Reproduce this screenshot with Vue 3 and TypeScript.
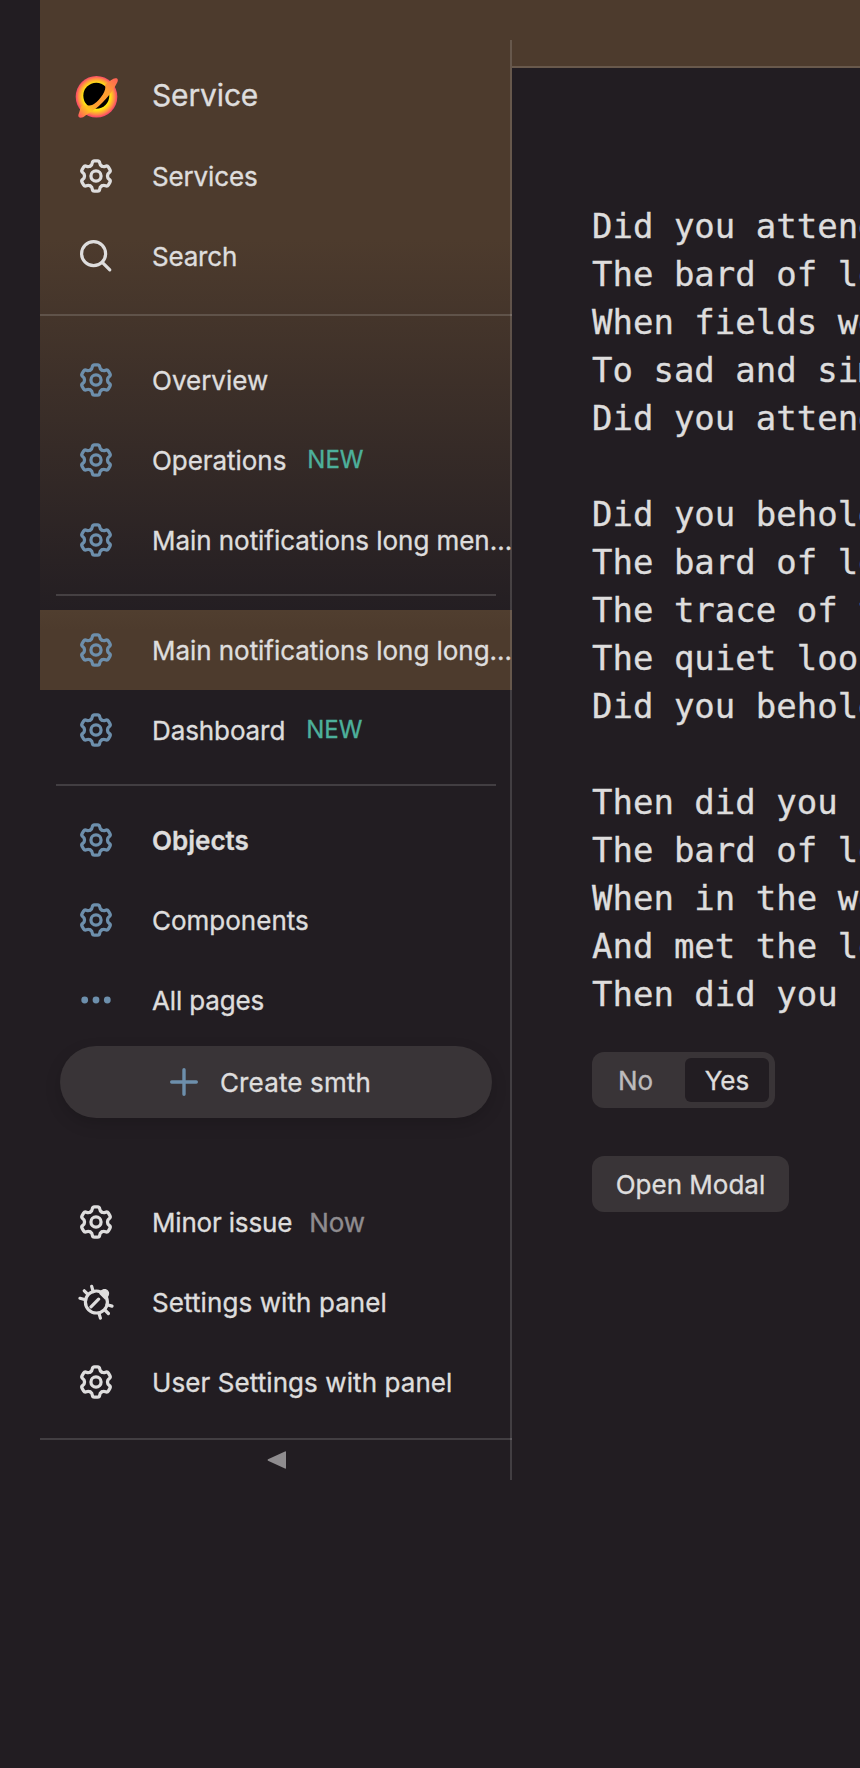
<script setup lang="ts">
interface MenuItem {
  title: string
  icon: 'gear' | 'search' | 'dots' | 'bug'
  tracking?: number
  badge?: string
  muted?: boolean
  active?: boolean
  bold?: boolean
}

const subheader: MenuItem[] = [
  { title: 'Services', icon: 'gear', tracking: -0.15 },
  { title: 'Search', icon: 'search', tracking: -0.2 },
]

const groups: MenuItem[][] = [
  [
    { title: 'Overview', icon: 'gear' },
    { title: 'Operations', icon: 'gear', badge: 'NEW', tracking: -0.05 },
    { title: 'Main notifications long men…', icon: 'gear', tracking: -0.05 },
  ],
  [
    { title: 'Main notifications long long…', icon: 'gear', active: true, tracking: -0.05 },
    { title: 'Dashboard', icon: 'gear', badge: 'NEW', tracking: -0.1 },
  ],
  [
    { title: 'Objects', icon: 'gear', bold: true },
    { title: 'Components', icon: 'gear' },
    { title: 'All pages', icon: 'dots', tracking: -0.15 },
  ],
]

const footer: MenuItem[] = [
  { title: 'Minor issue', icon: 'gear', badge: 'Now', muted: true, tracking: -0.18 },
  { title: 'Settings with panel', icon: 'bug', tracking: 0.09 },
  { title: 'User Settings with panel', icon: 'gear', tracking: 0.08 },
]

const sections = [
  { name: 'top', groups: [subheader] },
  { name: 'menu', groups },
  { name: 'bottom', groups: [footer] },
]

const teeth = [0, 60, 120, 180, 240, 300]

const poem = `Did you attend? He sang by grove ripe -
The bard of love, the singer of his mourning.
When fields were silent by the early morning,
To sad and simple sounds of a pipe
Did you attend?

Did you behold in dark of forest leaf
The bard of love, the singer of his sadness?
The trace of tears, the smile, the utter paleness,
The quiet look, full of eternal grief,
Did you behold?

Then did you sigh when hearing how cries
The bard of love, the singer of his dolor?
When in the woods you saw the young man, sole,
And met the look of his extinguished eyes,
Then did you sigh?`
</script>

<template>
  <div class="page">
    <aside class="aside">
      <div class="brand">
        <svg class="logo" viewBox="0 0 60 60">
          <defs>
            <radialGradient id="disc" cx="26.5" cy="31.5" r="20.8" gradientUnits="userSpaceOnUse">
              <stop offset=".62" stop-color="#ffee10" />
              <stop offset=".74" stop-color="#ffc224" />
              <stop offset=".87" stop-color="#ff8748" />
              <stop offset=".98" stop-color="#f94c66" />
            </radialGradient>
            <linearGradient id="band" x1="46" y1="14" x2="10" y2="52" gradientUnits="userSpaceOnUse">
              <stop offset="0" stop-color="#ff6355" />
              <stop offset=".28" stop-color="#ff9f30" />
              <stop offset=".62" stop-color="#ff9b32" />
              <stop offset=".78" stop-color="#ffc51c" />
              <stop offset="1" stop-color="#ff5c5c" />
            </linearGradient>
          </defs>
          <circle cx="26.5" cy="31.7" r="20.8" fill="url(#disc)" />
          <circle cx="26.3" cy="30.8" r="13" fill="#000" />
          <path
            d="M34.8 20 C39.5 16.2 43 13.3 45.3 13.2 C48 13 48.4 15.1 47.2 17.4 C43 26.5 31.5 40.5 21 46.7 C16.8 49 13.7 52.9 10.6 52.7 C8.1 52.5 7.8 50.6 9 48 C10.5 44.8 9.7 42 12 41 C15.4 39.6 20 41.8 24.3 38.8 C30.5 34.5 37.4 24.3 34.8 20 Z"
            fill="url(#band)"
          />
        </svg>
        <span class="brand-title">Service</span>
      </div>

      <nav v-for="section in sections" :key="section.name" :class="['section', section.name]">
        <ul v-for="(group, g) in section.groups" :key="g" class="group">
          <li
            v-for="item in group"
            :key="item.title"
            :class="['item', { active: item.active, bold: item.bold }]"
          >
            <svg v-if="item.icon === 'gear'" class="icon" viewBox="0 0 16 16">
              <g class="line">
                <path
                  v-for="angle in teeth"
                  :key="angle"
                  :transform="`rotate(${angle} 8 8)`"
                  d="M5.45 3.58c.45-.26.85-.7.9-1.4.06-.6.4-.93 1-.93h1.3c.6 0 .94.33 1 .93.05.7.45 1.14.9 1.4"
                />
                <circle cx="8" cy="8" r="2.25" />
              </g>
            </svg>
            <svg v-else-if="item.icon === 'search'" class="icon" viewBox="0 0 36 36">
              <g class="line wide">
                <circle cx="15.6" cy="15.7" r="12" />
                <path d="m24.3 24.3 7.5 7.5" />
              </g>
            </svg>
            <svg v-else-if="item.icon === 'dots'" class="icon" viewBox="0 0 36 36">
              <circle cx="6.7" cy="18" r="3.4" fill="currentColor" />
              <circle cx="18" cy="18" r="3.4" fill="currentColor" />
              <circle cx="29.3" cy="18" r="3.4" fill="currentColor" />
            </svg>
            <svg v-else class="icon" viewBox="0 0 36 36">
              <g class="line wide">
                <circle cx="18.4" cy="18" r="11" />
                <path d="m13 22.8 7.6-7.6M13.7 2.3l1.5 5.5M6.3 6.8l3.6 3.6M2 14.3l5.4 1.5M29.2 20.8l4.8 1.3M27.4 26.5l3 3M21 29.4l1.4 4.7" />
              </g>
              <path d="M22.7 6.6c2.4-2.3 6-2 7.5.2 1.6 2 1.2 4.7-.6 6.6l-2.5 2.3-6-6Z" fill="currentColor" />
            </svg>
            <span class="label" :style="{ letterSpacing: `${item.tracking ?? 0}px` }">{{ item.title }}</span>
            <span v-if="item.badge" :class="['badge', { muted: item.muted }]">{{ item.badge }}</span>
          </li>
        </ul>
        <button v-if="section.name === 'menu'" class="create" type="button">
          <svg class="plus" viewBox="0 0 28 28"><path d="M14 1.7v24.6M1.7 14h24.6" /></svg>
          <span class="create-label">Create smth</span>
        </button>
      </nav>

      <div class="collapse">
        <svg class="arrow" viewBox="0 0 19 18">
          <path d="M1 8.2 18 .4q1-.4 1 .7v15.8q0 1.1-1 .7L1 9.8q-1-.8 0-1.6Z" fill="currentColor" />
        </svg>
      </div>
    </aside>

    <main class="main">
      <div class="top-strip"></div>
      <div class="content">
        <pre class="poem">{{ poem }}</pre>
        <div class="switch">
          <span class="option">No</span>
          <span class="option selected">Yes</span>
        </div>
        <button class="modal" type="button">Open Modal</button>
      </div>
    </main>
  </div>
</template>

<style>
body {
  margin: 0;
  background: #221d22;
}
</style>

<style scoped>
.page {
  display: grid;
  grid-template-columns: 472px 1fr;
  width: 860px;
  height: 1768px;
  padding-left: 40px;
  box-sizing: border-box;
  overflow: hidden;
  background: #221d22;
  color: #dedddd;
  font: 26px/36px Inter, "Liberation Sans", sans-serif;
  -webkit-text-stroke: 0.35px currentColor;
}
.aside {
  position: relative;
  display: flex;
  flex-direction: column;
  height: 1480px;
  padding-top: 56px;
  box-sizing: border-box;
  background: linear-gradient(#4d3b2d 240px, rgba(77, 59, 45, 0) 625px);
}
.aside::after {
  content: "";
  position: absolute;
  top: 40px;
  right: 0;
  bottom: 0;
  width: 2px;
  background: rgba(255, 255, 255, 0.15);
}
.brand {
  display: flex;
  align-items: center;
  height: 80px;
}
.logo {
  width: 60px;
  height: 60px;
  margin: -2px 22px 0 30px;
}
.brand-title {
  font-size: 30px;
  margin-top: -3px;
  letter-spacing: -0.15px;
}
.section {
  display: flex;
  flex-direction: column;
}
.top {
  height: 178px;
  border-bottom: 2px solid rgba(255, 255, 255, 0.15);
}
.menu {
  padding-top: 24px;
}
.menu .icon {
  color: #6d8fac;
}
.group {
  margin: 0;
  padding: 0;
  list-style: none;
}
.group + .group::before {
  content: "";
  display: block;
  height: 2px;
  margin: 14px 16px;
  background: rgba(255, 255, 255, 0.15);
}
.item {
  display: flex;
  align-items: center;
  height: 80px;
  white-space: nowrap;
}
.active {
  background: linear-gradient(#503e2f, #4d3b2d 20px);
}
.bold .label {
  font-weight: 600;
}
.icon {
  flex: none;
  width: 36px;
  height: 36px;
  margin: 0 38px;
}
.line {
  fill: none;
  stroke: currentColor;
  stroke-width: 1.45;
  stroke-linecap: round;
}
.wide {
  stroke-width: 3.2;
}
.label {
  flex: none;
  margin-top: 2px;
}
.badge {
  margin: 0 0 0 21px;
  color: #4db09b;
  font-size: 24px;
}
.badge.muted {
  margin: 2px 0 0 17px;
  color: #8f8c8f;
  font-size: 26px;
  letter-spacing: -0.1px;
}
.create {
  display: flex;
  align-items: center;
  justify-content: center;
  gap: 22px;
  height: 72px;
  margin: 6px 20px 0;
  padding: 0 11px 0 0;
  border: 0;
  border-radius: 36px;
  background: #393437;
  box-shadow: 0 6px 16px rgba(0, 0, 0, 0.15);
  color: inherit;
  font: inherit;
}
.create-label {
  margin-top: 2px;
  letter-spacing: 0.15px;
}
.plus {
  width: 28px;
  height: 28px;
  fill: none;
  stroke: #6d8fac;
  stroke-width: 3.4;
  stroke-linecap: round;
}
.bottom {
  margin-top: 64px;
  height: 256px;
  border-bottom: 2px solid rgba(255, 255, 255, 0.15);
}
.collapse {
  flex: 1;
  display: flex;
  justify-content: center;
  color: #8f8c8f;
}
.arrow {
  width: 19px;
  height: 18px;
  margin: 11px 0 0 1px;
}
.main {
  min-width: 0;
}
.top-strip {
  height: 66px;
  border-bottom: 2px solid #69594c;
  background: #4d3b2d;
}
.content {
  display: flex;
  flex-direction: column;
  align-items: flex-start;
  padding: 134px 0 0 80px;
}
.poem {
  margin: 0;
  font: 34px/48px "DejaVu Sans Mono", monospace;
}
.switch {
  display: flex;
  box-sizing: border-box;
  width: 183px;
  height: 56px;
  margin-top: 34px;
  padding: 6px;
  border-radius: 12px;
  background: #393437;
}
.option {
  flex: none;
  width: 75px;
  line-height: 45px;
  text-align: center;
  color: #bdbbbc;
}
.selected {
  width: 84px;
  margin-left: auto;
  border-radius: 6px;
  background: #221d22;
  color: #dedddd;
}
.modal {
  width: 197px;
  height: 56px;
  margin-top: 48px;
  padding: 1px 0 0;
  border: 0;
  border-radius: 12px;
  background: #393437;
  color: inherit;
  font: inherit;
}
</style>
